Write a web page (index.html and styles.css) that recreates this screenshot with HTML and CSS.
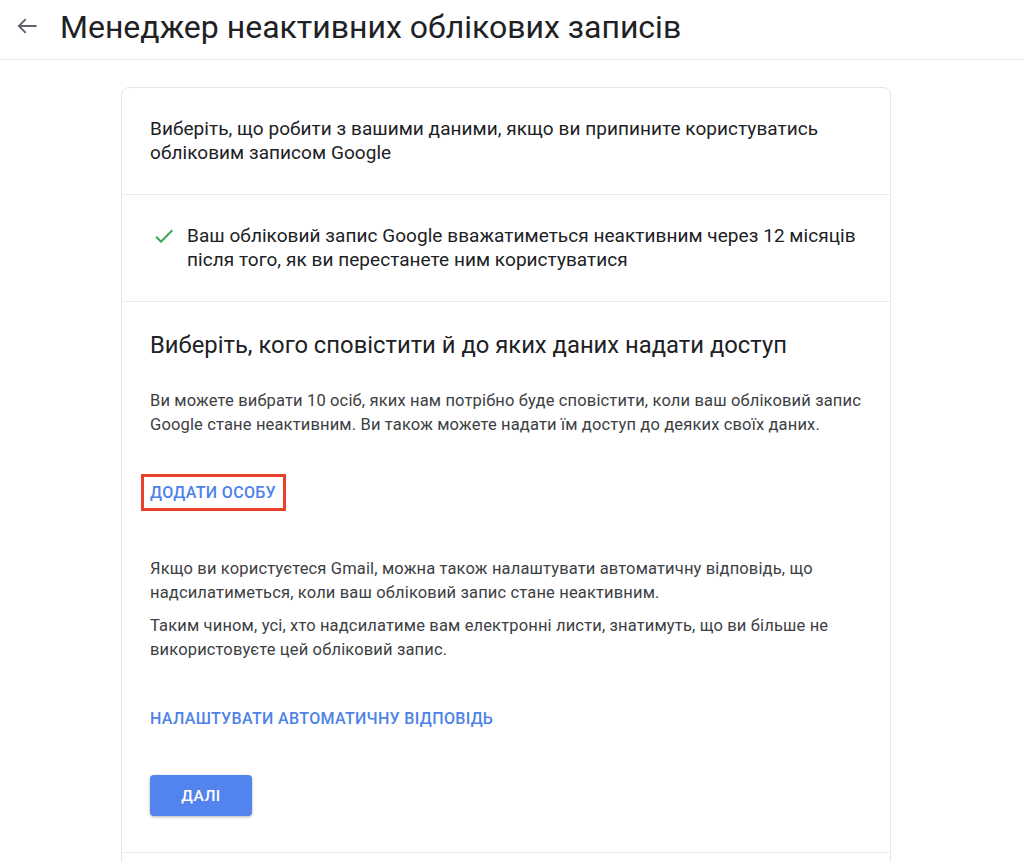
FILE: index.html
```html
<!DOCTYPE html>
<html lang="uk">
<head>
<meta charset="utf-8">
<title>Менеджер неактивних облікових записів</title>
<link rel="stylesheet" href="styles.css">
</head>
<body>
<header class="topbar">
  <span class="back">
    <svg width="20" height="16" viewBox="0 0 20 16"><path d="M19.5 8H2 M8.7 1.2 L1.9 8 L8.7 14.8" fill="none" stroke="#5f6368" stroke-width="1.9"/></svg>
  </span>
  <h1 class="title">Менеджер неактивних облікових записів</h1>
</header>
<main class="wrap">
  <div class="card">
    <section class="sec sec-intro">
      <p class="lead">Виберіть, що робити з вашими даними, якщо ви припините користуватись обліковим записом Google</p>
    </section>
    <section class="sec sec-status">
      <span class="check">
        <svg width="24" height="24" viewBox="0 0 24 24"><path d="M9 16.17L4.83 12l-1.42 1.41L9 19 21 7l-1.41-1.41z" fill="#34a853"/></svg>
      </span>
      <p class="lead">Ваш обліковий запис Google вважатиметься неактивним через 12 місяців після того, як ви перестанете ним користуватися</p>
    </section>
    <section class="sec sec-main">
      <h2 class="heading">Виберіть, кого сповістити й до яких даних надати доступ</h2>
      <p class="para">Ви можете вибрати 10 осіб, яких нам потрібно буде сповістити, коли ваш обліковий запис Google стане неактивним. Ви також можете надати їм доступ до деяких своїх даних.</p>
      <div class="add-row"><a class="link link-boxed">ДОДАТИ ОСОБУ</a></div>
      <p class="para para-gap">Якщо ви користуєтеся Gmail, можна також налаштувати автоматичну відповідь, що надсилатиметься, коли ваш обліковий запис стане неактивним.</p>
      <p class="para para-next">Таким чином, усі, хто надсилатиме вам електронні листи, знатимуть, що ви більше не використовуєте цей обліковий запис.</p>
      <div class="auto-row"><a class="link">НАЛАШТУВАТИ АВТОМАТИЧНУ ВІДПОВІДЬ</a></div>
      <div class="btn-row"><button class="btn">ДАЛІ</button></div>
    </section>
    <section class="sec sec-tail"></section>
  </div>
</main>
</body>
</html>
```
FILE: styles.css
```css
* { box-sizing: border-box; }
html, body { margin: 0; padding: 0; background: #fff; }
body {
  font-family: Roboto, "Noto Sans", Arial, sans-serif;
  color: #202124;
  overflow: hidden;
  height: 862px;
}
.topbar {
  height: 60px;
  border-bottom: 1px solid #e8e8e8;
  display: flex;
  align-items: center;
  padding-left: 17px;
}
.back {
  width: 20px;
  height: 16px;
  display: flex;
  margin-right: 23px;
  margin-top: -7px;
}
.title {
  margin: 0;
  font-size: 32px;
  font-weight: 400;
  color: #202124;
  margin-top: -6px;
}
.wrap {
  padding-top: 27px;
  padding-left: 121px;
}
.card {
  width: 770px;
  border: 1px solid #e6e6e6;
  border-radius: 8px;
  background: #fff;
}
.sec {
  border-bottom: 1px solid #ebebeb;
  padding: 0 28px;
}
.sec-intro { padding-top: 29px; padding-bottom: 29px; }
.sec-status {
  padding-top: 29px;
  padding-bottom: 29px;
  display: flex;
  align-items: flex-start;
}
.check {
  width: 24px;
  height: 24px;
  margin-left: 2px;
  margin-right: 11px;
  display: flex;
  align-items: center;
  justify-content: center;
}
.lead {
  margin: 0;
  font-size: 19px;
  line-height: 24px;
  letter-spacing: 0.05px;
  color: #202124;
}
.sec-main { padding-top: 29px; padding-bottom: 36px; }
.heading {
  margin: 0;
  font-size: 23.8px;
  line-height: 28px;
  font-weight: 400;
  color: #202124;
}
.para {
  margin: 0;
  font-size: 16.5px;
  line-height: 24px;
  letter-spacing: 0.15px;
  color: #3c4043;
}
.sec-main .heading + .para { margin-top: 30px; }
.add-row {
  margin-top: 37px;
  margin-left: -9px;
  display: flex;
}
.link {
  font-size: 16px;
  font-weight: 500;
  color: #4d82e8;
  letter-spacing: 0.35px;
  line-height: 20px;
  text-decoration: none;
}
.link-boxed {
  border: 3px solid #e8402c;
  padding: 6px 7px 5px 6px;
}
.para-gap { margin-top: 46px; }
.para-next { margin-top: 9px; }
.auto-row { margin-top: 47px; }
.btn-row { margin-top: 46px; }
.btn {
  width: 102px;
  height: 41px;
  border: none;
  border-radius: 4px;
  background: #5383ec;
  color: #fff;
  font-family: inherit;
  font-size: 15.5px;
  font-weight: 500;
  letter-spacing: 0.5px;
  box-shadow: 0 1px 3px rgba(0,0,0,0.3);
}
.sec-tail { height: 40px; border-bottom: none; }
```
